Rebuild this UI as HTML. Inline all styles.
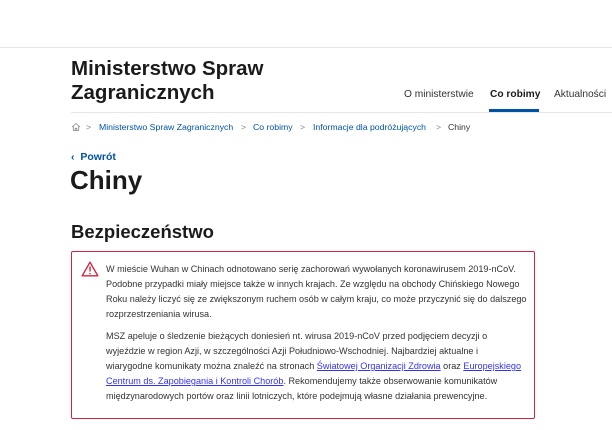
<!DOCTYPE html>
<html><head><meta charset="utf-8"><style>
*{margin:0;padding:0;box-sizing:border-box}
body{width:612px;height:430px;overflow:hidden;background:#fff;font-family:"Liberation Sans",sans-serif;color:#1b1b1b;position:relative}
.a{position:absolute;white-space:nowrap}
.topline{position:absolute;left:0;top:47px;width:612px;height:1px;background:#e6e6e6}
.title{left:71px;top:57px;font-size:20.5px;font-weight:bold;line-height:24px;color:#1b1b1b}
.nav{top:89px;font-size:10.2px;color:#333}
.sep{position:absolute;left:71px;top:112px;width:541px;height:1px;background:#e6e6e6}
.ul{position:absolute;left:489px;top:109px;width:50px;height:3px;background:#0052a5}
.bc{top:122px;font-size:8.7px;color:#0052a5}
.chev{color:#888}
.box{position:absolute;left:71px;top:251px;width:464px;height:168px;border:1.5px solid #d4213d;border-radius:2px}
.p{position:absolute;left:106px;font-size:9.1px;line-height:15px;color:#333;white-space:nowrap}
.p a{color:#3333ee;text-decoration:underline}
</style></head><body>
<div class="topline"></div>
<div class="a title">Ministerstwo Spraw<br>Zagranicznych</div>
<div class="a nav" style="left:404px">O ministerstwie</div>
<div class="a nav" style="left:490px;font-weight:bold;color:#1b1b1b">Co robimy</div>
<div class="a nav" style="left:554px">Aktualności</div>
<div class="ul"></div>
<div class="sep"></div>
<svg class="a" style="left:71px;top:122px" width="10" height="10" viewBox="0 0 10 10"><path d="M1 5L5 1.5 9 5M2.3 4v4.5h5.4V4M4.2 8.5V6.3h1.6v2.2" fill="none" stroke="#888" stroke-width=".8"/></svg>
<div class="a bc chev" style="left:86px">&gt;</div>
<div class="a bc" style="left:99px">Ministerstwo Spraw Zagranicznych</div>
<div class="a bc chev" style="left:241px">&gt;</div>
<div class="a bc" style="left:253px">Co robimy</div>
<div class="a bc chev" style="left:300px">&gt;</div>
<div class="a bc" style="left:313px">Informacje dla podróżujących</div>
<div class="a bc chev" style="left:436px">&gt;</div>
<div class="a bc" style="left:448px;color:#333">Chiny</div>
<div class="a" style="left:71px;top:151px;font-size:10.5px;font-weight:bold;color:#0052a5">‹&nbsp; Powrót</div>
<div class="a" style="left:70px;top:165px;font-size:26px;font-weight:bold">Chiny</div>
<div class="a" style="left:71px;top:221px;font-size:18.5px;font-weight:bold">Bezpieczeństwo</div>
<div class="box"></div>
<svg class="a" style="left:81px;top:261px" width="18" height="16" viewBox="0 0 18 16"><path d="M9 1.2L16.8 14.8H1.2Z" fill="none" stroke="#d4213d" stroke-width="1.4" stroke-linejoin="round"/><path d="M9 5.5v5M9 12v1.2" stroke="#d4213d" stroke-width="1.4"/></svg>
<div class="p" style="top:262px">W mieście Wuhan w Chinach odnotowano serię zachorowań wywołanych koronawirusem 2019-nCoV.<br>Podobne przypadki miały miejsce także w innych krajach. Ze względu na obchody Chińskiego Nowego<br>Roku należy liczyć się ze zwiększonym ruchem osób w całym kraju, co może przyczynić się do dalszego<br>rozprzestrzeniania wirusa.</div>
<div class="p" style="top:329px">MSZ apeluje o śledzenie bieżących doniesień nt. wirusa 2019-nCoV przed podjęciem decyzji o<br>wyjeździe w region Azji, w szczególności Azji Południowo-Wschodniej. Najbardziej aktualne i<br>wiarygodne komunikaty można znaleźć na stronach <a>Światowej Organizacji Zdrowia</a> oraz <a>Europejskiego</a><br><a>Centrum ds. Zapobiegania i Kontroli Chorób</a>. Rekomendujemy także obserwowanie komunikatów<br>międzynarodowych portów oraz linii lotniczych, które podejmują własne działania prewencyjne.</div>
</body></html>
